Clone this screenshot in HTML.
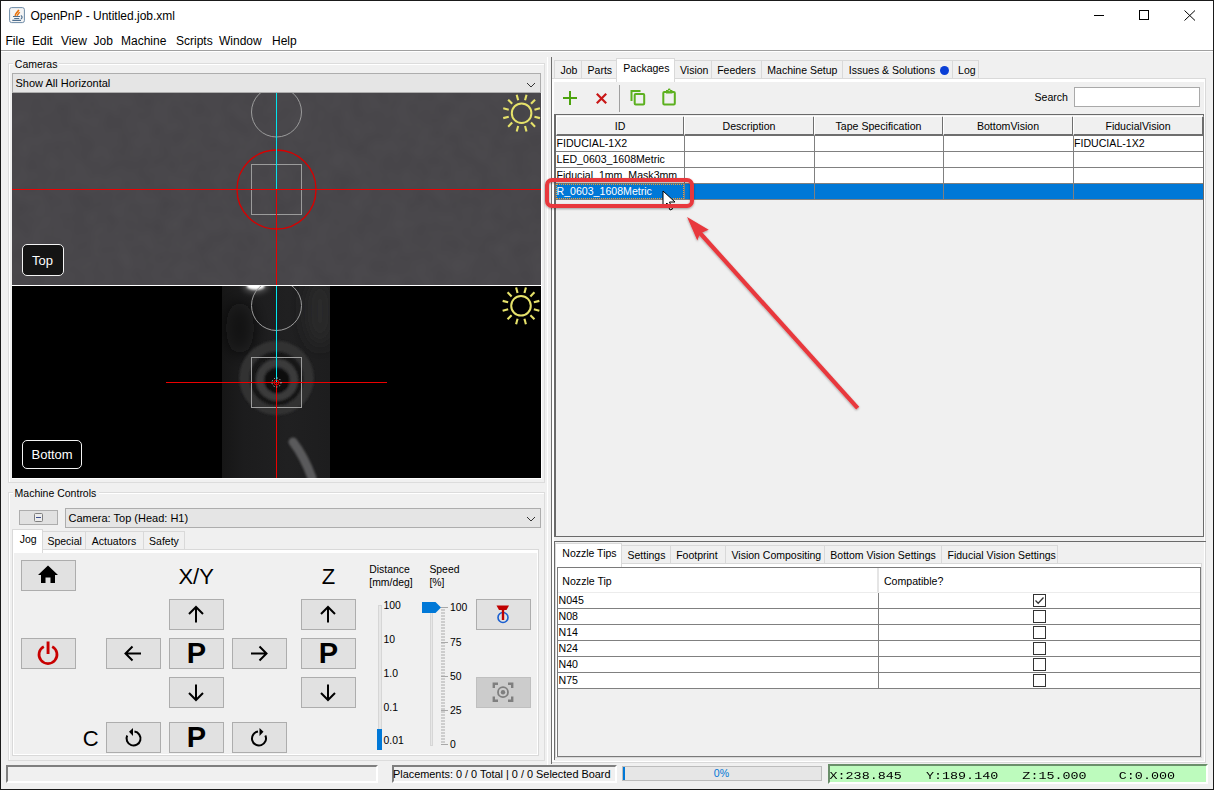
<!DOCTYPE html><html><head><meta charset="utf-8"><style>
html,body{margin:0;padding:0;}
body{width:1214px;height:790px;overflow:hidden;background:#f0f0f0;position:relative;font-family:"Liberation Sans",sans-serif;}
.a{position:absolute;}
.t{white-space:pre;}
</style></head><body>
<div class="a" style="left:0px;top:0px;width:1214px;height:51px;background:#fff;"></div>
<div class="a" style="left:0px;top:50px;width:1214px;height:1px;background:#a0a0a0;"></div>
<div class="a" style="left:0px;top:51px;width:1214px;height:1px;background:#fff;"></div>
<svg class="a" style="left:9px;top:7px;" width="17" height="17" viewBox="0 0 17 17">
<rect x="0.6" y="0.6" width="14.8" height="15" rx="2" fill="#f4f4f4" stroke="#6d8aa6" stroke-width="1"/>
<path d="M6.3 9 C5.8 7 8.5 5.5 9.8 2.8" stroke="#e8720c" stroke-width="1.7" fill="none"/>
<path d="M8.3 8.8 C8 7.5 10 6.5 10.6 5" stroke="#e8720c" stroke-width="1.4" fill="none"/>
<path d="M4 9.5 H11 M5.2 11.5 H10.2 M3.3 13.4 H12" stroke="#4f6f8f" stroke-width="1.2"/>
<path d="M11.8 8.6 Q14.3 10 12 12" stroke="#4f6f8f" stroke-width="1.2" fill="none"/>
</svg>
<div class="a t" style="top:10.34px;font-size:12px;line-height:12px;color:#000;font-weight:normal;font-family:'Liberation Sans', sans-serif;left:30.5px;">OpenPnP - Untitled.job.xml</div>
<div class="a" style="left:1094px;top:15px;width:10px;height:1px;background:#000;"></div>
<div class="a" style="left:1139px;top:10px;width:10px;height:10px;box-sizing:border-box;border:1px solid #000;"></div>
<svg class="a" style="left:1184px;top:10px;" width="12" height="11" viewBox="0 0 12 11"><path d="M0.5 0.5 L11 10.5 M11 0.5 L0.5 10.5" stroke="#000" stroke-width="1"/></svg>
<div class="a t" style="top:34.84px;font-size:12px;line-height:12px;color:#000;font-weight:normal;font-family:'Liberation Sans', sans-serif;left:5.5px;">File</div>
<div class="a t" style="top:34.84px;font-size:12px;line-height:12px;color:#000;font-weight:normal;font-family:'Liberation Sans', sans-serif;left:32px;">Edit</div>
<div class="a t" style="top:34.84px;font-size:12px;line-height:12px;color:#000;font-weight:normal;font-family:'Liberation Sans', sans-serif;left:61px;">View</div>
<div class="a t" style="top:34.84px;font-size:12px;line-height:12px;color:#000;font-weight:normal;font-family:'Liberation Sans', sans-serif;left:93.5px;">Job</div>
<div class="a t" style="top:34.84px;font-size:12px;line-height:12px;color:#000;font-weight:normal;font-family:'Liberation Sans', sans-serif;left:121px;">Machine</div>
<div class="a t" style="top:34.84px;font-size:12px;line-height:12px;color:#000;font-weight:normal;font-family:'Liberation Sans', sans-serif;left:176px;">Scripts</div>
<div class="a t" style="top:34.84px;font-size:12px;line-height:12px;color:#000;font-weight:normal;font-family:'Liberation Sans', sans-serif;left:219px;">Window</div>
<div class="a t" style="top:34.84px;font-size:12px;line-height:12px;color:#000;font-weight:normal;font-family:'Liberation Sans', sans-serif;left:272px;">Help</div>
<div class="a" style="left:8px;top:63px;width:537px;height:420px;box-sizing:border-box;border:1px solid #dcdcdc;"></div>
<div class="a" style="left:9px;top:64px;width:535px;height:418px;box-sizing:border-box;border:1px solid #fff;border-right:none;border-bottom:none;"></div>
<div class="a" style="left:12.8px;top:61px;width:46px;height:5px;background:#f0f0f0;"></div>
<div class="a t" style="top:59.11px;font-size:10.5px;line-height:10.5px;color:#000;font-weight:normal;font-family:'Liberation Sans', sans-serif;left:14.8px;">Cameras</div>
<div class="a" style="left:12px;top:73px;width:529px;height:20px;background:#e5e5e5;box-sizing:border-box;border:1px solid #adadad;"></div>
<div class="a t" style="top:77.69px;font-size:11px;line-height:11px;color:#000;font-weight:normal;font-family:'Liberation Sans', sans-serif;left:15.5px;">Show All Horizontal</div>
<svg class="a" style="left:526px;top:82px;" width="11" height="7" viewBox="0 0 11 7"><path d="M1 1 L5 5 L9 1" stroke="#333" stroke-width="1" fill="none"/></svg>
<svg class="a" style="left:12px;top:93px;" width="529" height="192" viewBox="0 0 529 192">
<defs><filter id="noise1"><feTurbulence type="fractalNoise" baseFrequency="0.05" numOctaves="2" seed="3"/><feColorMatrix values="0 0 0 0 0.5  0 0 0 0 0.5  0 0 0 0 0.5  0 0 0 0.06 0"/></filter></defs>
<rect width="529" height="192" fill="#454347"/>
<rect width="529" height="192" filter="url(#noise1)"/>
<circle cx="264.5" cy="19" r="25" stroke="#9b9b9b" stroke-width="1" fill="none"/>
<rect x="239.5" y="71.5" width="50" height="50" stroke="#9b9b9b" stroke-width="1" fill="none"/>
<circle cx="264.5" cy="96.5" r="39.5" stroke="#d80000" stroke-width="1.35" fill="none"/>
<rect x="0" y="96" width="529" height="1" fill="#ec0000"/>
<rect x="264" y="96" width="1" height="96" fill="#ec0000"/>
<rect x="264" y="0" width="1" height="96" fill="#00e5ef"/>
<circle cx="509.6" cy="20.2" r="9.8" stroke="#e6e26a" stroke-width="2" fill="none"/><line x1="522.45" y1="23.64" x2="527.95" y2="25.12" stroke="#e6e26a" stroke-width="2.1"/><line x1="519.00" y1="29.60" x2="523.04" y2="33.64" stroke="#e6e26a" stroke-width="2.1"/><line x1="513.04" y1="33.05" x2="514.52" y2="38.55" stroke="#e6e26a" stroke-width="2.1"/><line x1="506.16" y1="33.05" x2="504.68" y2="38.55" stroke="#e6e26a" stroke-width="2.1"/><line x1="500.20" y1="29.60" x2="496.16" y2="33.64" stroke="#e6e26a" stroke-width="2.1"/><line x1="496.75" y1="23.64" x2="491.25" y2="25.12" stroke="#e6e26a" stroke-width="2.1"/><line x1="496.75" y1="16.76" x2="491.25" y2="15.28" stroke="#e6e26a" stroke-width="2.1"/><line x1="500.20" y1="10.80" x2="496.16" y2="6.76" stroke="#e6e26a" stroke-width="2.1"/><line x1="506.16" y1="7.35" x2="504.68" y2="1.85" stroke="#e6e26a" stroke-width="2.1"/><line x1="513.04" y1="7.35" x2="514.52" y2="1.85" stroke="#e6e26a" stroke-width="2.1"/><line x1="519.00" y1="10.80" x2="523.04" y2="6.76" stroke="#e6e26a" stroke-width="2.1"/><line x1="522.45" y1="16.76" x2="527.95" y2="15.28" stroke="#e6e26a" stroke-width="2.1"/></svg>
<div class="a" style="left:12px;top:285px;width:529px;height:1px;background:#fff;"></div>
<svg class="a" style="left:12px;top:286px;" width="529" height="192" viewBox="0 0 529 192">
<defs>
<clipPath id="stripclip"><rect x="210" y="0" width="108" height="192"/></clipPath>
<filter id="bl0" filterUnits="userSpaceOnUse" x="150" y="-50" width="230" height="300"><feGaussianBlur stdDeviation="1.1"/></filter>
<filter id="bl1" x="-50%" y="-50%" width="200%" height="200%"><feGaussianBlur stdDeviation="1.2"/></filter>
<filter id="bl2" x="-50%" y="-50%" width="200%" height="200%"><feGaussianBlur stdDeviation="3"/></filter>
<filter id="bl3" filterUnits="userSpaceOnUse" x="150" y="-50" width="230" height="300"><feGaussianBlur stdDeviation="8"/></filter>
<linearGradient id="strip" x1="0" y1="0" x2="1" y2="0"><stop offset="0" stop-color="#161616"/><stop offset="0.2" stop-color="#1c1c1d"/><stop offset="0.6" stop-color="#202021"/><stop offset="1" stop-color="#1d1d1e"/></linearGradient>
</defs>
<rect width="529" height="192" fill="#000"/>
<rect x="210" y="0" width="108" height="192" fill="url(#strip)"/>

<g filter="url(#bl3)" clip-path="url(#stripclip)">
<ellipse cx="228" cy="42" rx="14" ry="26" fill="#101010" opacity="0.8"/>
<ellipse cx="308" cy="25" rx="14" ry="35" fill="#2a2a2b"/>
</g>
<g filter="url(#bl0)">
<circle cx="264.5" cy="92" r="32" stroke="#323233" stroke-width="10.5" fill="none"/>
<circle cx="264.5" cy="93" r="24" stroke="#121212" stroke-width="5" fill="none"/>
<circle cx="265" cy="94" r="17" stroke="#3a3a3b" stroke-width="8" fill="none"/>
<circle cx="265" cy="95" r="12.5" fill="#0b0b0b"/>
<path d="M281 156 Q292 170 300 192" stroke="#5a5a5b" stroke-width="9" stroke-linecap="round" fill="none"/>
</g>
<ellipse cx="243.7" cy="0" rx="12" ry="6" fill="#fff" opacity="0.35" filter="url(#bl2)"/><ellipse cx="243.7" cy="0" rx="9" ry="3.8" fill="#fff" filter="url(#bl1)"/>
<circle cx="264.5" cy="19.5" r="25" stroke="#9c9c9c" stroke-width="1" fill="none"/>
<rect x="239.5" y="71.5" width="50" height="50" stroke="#9c9c9c" stroke-width="1" fill="none"/>
<rect x="154" y="96" width="221" height="1" fill="#ec0000"/>
<rect x="264" y="96" width="1" height="96" fill="#ec0000"/>
<rect x="264" y="0" width="1" height="96" fill="#00e5ef"/>
<circle cx="264.5" cy="96.5" r="4.5" stroke="#ddd" stroke-width="1" stroke-dasharray="1 2" fill="none"/>
<circle cx="264.5" cy="96.5" r="2.5" stroke="#ec0000" stroke-width="1" fill="none"/>
<circle cx="509" cy="19.8" r="9.8" stroke="#e6e26a" stroke-width="2" fill="none"/><line x1="521.85" y1="23.24" x2="527.35" y2="24.72" stroke="#e6e26a" stroke-width="2.1"/><line x1="518.40" y1="29.20" x2="522.44" y2="33.24" stroke="#e6e26a" stroke-width="2.1"/><line x1="512.44" y1="32.65" x2="513.92" y2="38.15" stroke="#e6e26a" stroke-width="2.1"/><line x1="505.56" y1="32.65" x2="504.08" y2="38.15" stroke="#e6e26a" stroke-width="2.1"/><line x1="499.60" y1="29.20" x2="495.56" y2="33.24" stroke="#e6e26a" stroke-width="2.1"/><line x1="496.15" y1="23.24" x2="490.65" y2="24.72" stroke="#e6e26a" stroke-width="2.1"/><line x1="496.15" y1="16.36" x2="490.65" y2="14.88" stroke="#e6e26a" stroke-width="2.1"/><line x1="499.60" y1="10.40" x2="495.56" y2="6.36" stroke="#e6e26a" stroke-width="2.1"/><line x1="505.56" y1="6.95" x2="504.08" y2="1.45" stroke="#e6e26a" stroke-width="2.1"/><line x1="512.44" y1="6.95" x2="513.92" y2="1.45" stroke="#e6e26a" stroke-width="2.1"/><line x1="518.40" y1="10.40" x2="522.44" y2="6.36" stroke="#e6e26a" stroke-width="2.1"/><line x1="521.85" y1="16.36" x2="527.35" y2="14.88" stroke="#e6e26a" stroke-width="2.1"/></svg>
<div class="a" style="left:22px;top:244px;width:42px;height:32px;background:#141414;box-sizing:border-box;border:1.5px solid #f4f4f4;border-radius:5px;"></div>
<div class="a t" style="top:254.20px;font-size:13px;line-height:13px;color:#fff;font-weight:normal;font-family:'Liberation Sans', sans-serif;left:32px;">Top</div>
<div class="a" style="left:22px;top:440px;width:60px;height:29px;background:#000;box-sizing:border-box;border:1.5px solid #f4f4f4;border-radius:5px;"></div>
<div class="a t" style="top:447.80px;font-size:13px;line-height:13px;color:#fff;font-weight:normal;font-family:'Liberation Sans', sans-serif;left:31.5px;">Bottom</div>
<div class="a" style="left:541px;top:93px;width:1px;height:385px;background:#fff;"></div>
<div class="a" style="left:12px;top:478px;width:530px;height:1px;background:#fff;"></div>
<div class="a" style="left:8px;top:492px;width:537px;height:269px;box-sizing:border-box;border:1px solid #dcdcdc;"></div>
<div class="a" style="left:9px;top:493px;width:535px;height:267px;box-sizing:border-box;border:1px solid #fff;border-right:none;border-bottom:none;"></div>
<div class="a" style="left:12.6px;top:490px;width:86px;height:5px;background:#f0f0f0;"></div>
<div class="a t" style="top:488.11px;font-size:10.5px;line-height:10.5px;color:#000;font-weight:normal;font-family:'Liberation Sans', sans-serif;left:14.6px;">Machine Controls</div>
<div class="a" style="left:19px;top:510px;width:39px;height:15px;background:#e1e1e1;box-sizing:border-box;border:1px solid #adadad;"></div>
<svg class="a" style="left:34px;top:513px;" width="9" height="9" viewBox="0 0 9 9"><rect x="0.5" y="0.5" width="8" height="8" rx="1" fill="#ececec" stroke="#7f7f7f"/><rect x="2" y="4" width="5" height="1" fill="#3c4f8f"/></svg>
<div class="a" style="left:65px;top:508px;width:476px;height:20px;background:#e5e5e5;box-sizing:border-box;border:1px solid #adadad;"></div>
<div class="a t" style="top:512.69px;font-size:11px;line-height:11px;color:#000;font-weight:normal;font-family:'Liberation Sans', sans-serif;left:68.5px;">Camera: Top (Head: H1)</div>
<svg class="a" style="left:526px;top:516px;" width="11" height="7" viewBox="0 0 11 7"><path d="M1 1 L5 5 L9 1" stroke="#333" stroke-width="1" fill="none"/></svg>
<div class="a" style="left:12px;top:549px;width:527px;height:207px;background:#f0f0f0;box-sizing:border-box;border:1px solid #d9d9d9;"></div>
<div class="a" style="left:13px;top:550px;width:524px;height:3px;background:#fff;"></div>
<div class="a" style="left:13px;top:550px;width:1px;height:204px;background:#fff;"></div>
<div class="a" style="left:13px;top:754px;width:524px;height:1px;background:#fff;"></div>
<div class="a" style="left:537px;top:550px;width:1px;height:205px;background:#fff;"></div>
<div class="a" style="left:42px;top:531px;width:44px;height:19px;background:#f0f0f0;box-sizing:border-box;border:1px solid #d9d9d9;"></div>
<div class="a t" style="top:536.11px;font-size:10.5px;line-height:10.5px;color:#000;font-weight:normal;font-family:'Liberation Sans', sans-serif;left:47.4px;">Special</div>
<div class="a" style="left:85px;top:531px;width:59px;height:19px;background:#f0f0f0;box-sizing:border-box;border:1px solid #d9d9d9;"></div>
<div class="a t" style="top:536.11px;font-size:10.5px;line-height:10.5px;color:#000;font-weight:normal;font-family:'Liberation Sans', sans-serif;left:91.8px;">Actuators</div>
<div class="a" style="left:143px;top:531px;width:42px;height:19px;background:#f0f0f0;box-sizing:border-box;border:1px solid #d9d9d9;"></div>
<div class="a t" style="top:536.11px;font-size:10.5px;line-height:10.5px;color:#000;font-weight:normal;font-family:'Liberation Sans', sans-serif;left:149.1px;">Safety</div>
<div class="a" style="left:12px;top:529px;width:31px;height:24px;background:#fff;box-sizing:border-box;border:1px solid #d9d9d9;border-bottom:none;"></div>
<div class="a t" style="top:534.11px;font-size:10.5px;line-height:10.5px;color:#000;font-weight:normal;font-family:'Liberation Sans', sans-serif;left:19.7px;">Jog</div>
<div class="a" style="left:21px;top:560px;width:55px;height:31px;background:#e1e1e1;box-sizing:border-box;border:1px solid #adadad;"></div>
<svg class="a" style="left:21px;top:560px;" width="55" height="31" viewBox="0 0 55 31"><path d="M27 5.5 L37 15 L34 15 L34 23 L29.5 23 L29.5 17.5 L24.5 17.5 L24.5 23 L20 23 L20 15 L17 15 Z" fill="#000"/></svg>
<div class="a" style="left:21px;top:638px;width:55px;height:31px;background:#e1e1e1;box-sizing:border-box;border:1px solid #adadad;"></div>
<svg class="a" style="left:21px;top:638px;" width="55" height="31" viewBox="0 0 55 31"><path d="M31.2 8.6 A9 9 0 1 1 22.8 8.6" stroke="#c80000" stroke-width="2.7" fill="none"/><rect x="25.6" y="3.5" width="2.9" height="12.5" fill="#c80000"/></svg>
<div class="a t" style="top:565.68px;font-size:22px;line-height:22px;color:#000;font-weight:normal;font-family:'Liberation Sans', sans-serif;left:-303.9px;width:1000px;text-align:center;">X/Y</div>
<div class="a t" style="top:565.68px;font-size:22px;line-height:22px;color:#000;font-weight:normal;font-family:'Liberation Sans', sans-serif;left:-171.60000000000002px;width:1000px;text-align:center;">Z</div>
<div class="a" style="left:169px;top:599px;width:55px;height:31px;background:#e1e1e1;box-sizing:border-box;border:1px solid #adadad;"></div>
<svg class="a" style="left:169px;top:599px;" width="55" height="31" viewBox="0 0 55 31"><path d="M27 23.5 V8.0 M20 15.0 L27 8.0 L34 15.0" stroke="#000" stroke-width="2" fill="none"/></svg>
<div class="a" style="left:301px;top:599px;width:55px;height:31px;background:#e1e1e1;box-sizing:border-box;border:1px solid #adadad;"></div>
<svg class="a" style="left:301px;top:599px;" width="55" height="31" viewBox="0 0 55 31"><path d="M27 23.5 V8.0 M20 15.0 L27 8.0 L34 15.0" stroke="#000" stroke-width="2" fill="none"/></svg>
<div class="a" style="left:106px;top:638px;width:55px;height:31px;background:#e1e1e1;box-sizing:border-box;border:1px solid #adadad;"></div>
<svg class="a" style="left:106px;top:638px;" width="55" height="31" viewBox="0 0 55 31"><path d="M35 15.5 H19.5 M26.5 8.5 L19.5 15.5 L26.5 22.5" stroke="#000" stroke-width="2" fill="none"/></svg>
<div class="a" style="left:169px;top:638px;width:55px;height:31px;background:#e1e1e1;box-sizing:border-box;border:1px solid #adadad;"></div>
<svg class="a" style="left:169px;top:638px;" width="55" height="31" viewBox="0 0 55 31"><text x="27.5" y="25" text-anchor="middle" font-family="Liberation Sans" font-weight="bold" font-size="29" fill="#000">P</text></svg>
<div class="a" style="left:232px;top:638px;width:55px;height:31px;background:#e1e1e1;box-sizing:border-box;border:1px solid #adadad;"></div>
<svg class="a" style="left:232px;top:638px;" width="55" height="31" viewBox="0 0 55 31"><path d="M19 15.5 H34.5 M27.5 8.5 L34.5 15.5 L27.5 22.5" stroke="#000" stroke-width="2" fill="none"/></svg>
<div class="a" style="left:301px;top:638px;width:55px;height:31px;background:#e1e1e1;box-sizing:border-box;border:1px solid #adadad;"></div>
<svg class="a" style="left:301px;top:638px;" width="55" height="31" viewBox="0 0 55 31"><text x="27.5" y="25" text-anchor="middle" font-family="Liberation Sans" font-weight="bold" font-size="29" fill="#000">P</text></svg>
<div class="a" style="left:169px;top:677px;width:55px;height:31px;background:#e1e1e1;box-sizing:border-box;border:1px solid #adadad;"></div>
<svg class="a" style="left:169px;top:677px;" width="55" height="31" viewBox="0 0 55 31"><path d="M27 7.5 V23.0 M20 16.0 L27 23.0 L34 16.0" stroke="#000" stroke-width="2" fill="none"/></svg>
<div class="a" style="left:301px;top:677px;width:55px;height:31px;background:#e1e1e1;box-sizing:border-box;border:1px solid #adadad;"></div>
<svg class="a" style="left:301px;top:677px;" width="55" height="31" viewBox="0 0 55 31"><path d="M27 7.5 V23.0 M20 16.0 L27 23.0 L34 16.0" stroke="#000" stroke-width="2" fill="none"/></svg>
<div class="a t" style="top:727.88px;font-size:22px;line-height:22px;color:#000;font-weight:normal;font-family:'Liberation Sans', sans-serif;left:-409.2px;width:1000px;text-align:center;">C</div>
<div class="a" style="left:106px;top:722px;width:55px;height:31px;background:#e1e1e1;box-sizing:border-box;border:1px solid #adadad;"></div>
<svg class="a" style="left:106px;top:722px;" width="55" height="31" viewBox="0 0 55 31"><path d="M21.16 13.54 A7 7 0 1 0 28.47 9.57" stroke="#000" stroke-width="2" fill="none"/><path d="M23 9.8 L27 5.9 L27 14 Z" fill="#000"/></svg>
<div class="a" style="left:169px;top:722px;width:55px;height:31px;background:#e1e1e1;box-sizing:border-box;border:1px solid #adadad;"></div>
<svg class="a" style="left:169px;top:722px;" width="55" height="31" viewBox="0 0 55 31"><text x="27.5" y="25" text-anchor="middle" font-family="Liberation Sans" font-weight="bold" font-size="29" fill="#000">P</text></svg>
<div class="a" style="left:232px;top:722px;width:55px;height:31px;background:#e1e1e1;box-sizing:border-box;border:1px solid #adadad;"></div>
<svg class="a" style="left:232px;top:722px;" width="55" height="31" viewBox="0 0 55 31"><path d="M33.34 13.54 A7 7 0 1 1 26.03 9.57" stroke="#000" stroke-width="2" fill="none"/><path d="M31.5 9.8 L27.5 5.9 L27.5 14 Z" fill="#000"/></svg>
<div class="a t" style="top:564.80px;font-size:10.4px;line-height:10.4px;color:#000;font-weight:normal;font-family:'Liberation Sans', sans-serif;left:369.3px;">Distance</div>
<div class="a t" style="top:577.70px;font-size:10.4px;line-height:10.4px;color:#000;font-weight:normal;font-family:'Liberation Sans', sans-serif;left:369.3px;">[mm/deg]</div>
<div class="a t" style="top:564.80px;font-size:10.4px;line-height:10.4px;color:#000;font-weight:normal;font-family:'Liberation Sans', sans-serif;left:429.4px;">Speed</div>
<div class="a t" style="top:577.70px;font-size:10.4px;line-height:10.4px;color:#000;font-weight:normal;font-family:'Liberation Sans', sans-serif;left:429.4px;">[%]</div>
<div class="a" style="left:378px;top:605px;width:4px;height:140px;background:#e7e7e7;box-sizing:border-box;border:1px solid #d6d6d6;"></div>
<div class="a" style="left:377px;top:729px;width:5px;height:21px;background:#0078d7;"></div>
<div class="a t" style="top:600.90px;font-size:10.4px;line-height:10.4px;color:#000;font-weight:normal;font-family:'Liberation Sans', sans-serif;left:383.5px;">100</div>
<div class="a t" style="top:635.20px;font-size:10.4px;line-height:10.4px;color:#000;font-weight:normal;font-family:'Liberation Sans', sans-serif;left:383.5px;">10</div>
<div class="a t" style="top:669.20px;font-size:10.4px;line-height:10.4px;color:#000;font-weight:normal;font-family:'Liberation Sans', sans-serif;left:383.5px;">1.0</div>
<div class="a t" style="top:703.00px;font-size:10.4px;line-height:10.4px;color:#000;font-weight:normal;font-family:'Liberation Sans', sans-serif;left:383.5px;">0.1</div>
<div class="a t" style="top:736.20px;font-size:10.4px;line-height:10.4px;color:#000;font-weight:normal;font-family:'Liberation Sans', sans-serif;left:383.5px;">0.01</div>
<div class="a" style="left:430px;top:607px;width:3px;height:139px;background:#e7e7e7;box-sizing:border-box;border:1px solid #d6d6d6;"></div>
<div class="a" style="left:441px;top:609px;width:4px;height:2px;background:#cdcdcd;"></div>
<div class="a" style="left:441px;top:612px;width:4px;height:2px;background:#cdcdcd;"></div>
<div class="a" style="left:441px;top:615px;width:4px;height:2px;background:#cdcdcd;"></div>
<div class="a" style="left:441px;top:618px;width:4px;height:2px;background:#cdcdcd;"></div>
<div class="a" style="left:441px;top:621px;width:4px;height:2px;background:#cdcdcd;"></div>
<div class="a" style="left:441px;top:624px;width:4px;height:2px;background:#cdcdcd;"></div>
<div class="a" style="left:441px;top:627px;width:4px;height:2px;background:#cdcdcd;"></div>
<div class="a" style="left:441px;top:630px;width:4px;height:2px;background:#cdcdcd;"></div>
<div class="a" style="left:441px;top:633px;width:4px;height:2px;background:#cdcdcd;"></div>
<div class="a" style="left:441px;top:636px;width:4px;height:2px;background:#cdcdcd;"></div>
<div class="a" style="left:441px;top:639px;width:4px;height:2px;background:#cdcdcd;"></div>
<div class="a" style="left:441px;top:642px;width:4px;height:2px;background:#cdcdcd;"></div>
<div class="a" style="left:441px;top:645px;width:4px;height:2px;background:#cdcdcd;"></div>
<div class="a" style="left:441px;top:648px;width:4px;height:2px;background:#cdcdcd;"></div>
<div class="a" style="left:441px;top:651px;width:4px;height:2px;background:#cdcdcd;"></div>
<div class="a" style="left:441px;top:654px;width:4px;height:2px;background:#cdcdcd;"></div>
<div class="a" style="left:441px;top:657px;width:4px;height:2px;background:#cdcdcd;"></div>
<div class="a" style="left:441px;top:660px;width:4px;height:2px;background:#cdcdcd;"></div>
<div class="a" style="left:441px;top:663px;width:4px;height:2px;background:#cdcdcd;"></div>
<div class="a" style="left:441px;top:666px;width:4px;height:2px;background:#cdcdcd;"></div>
<div class="a" style="left:441px;top:669px;width:4px;height:2px;background:#cdcdcd;"></div>
<div class="a" style="left:441px;top:672px;width:4px;height:2px;background:#cdcdcd;"></div>
<div class="a" style="left:441px;top:675px;width:4px;height:2px;background:#cdcdcd;"></div>
<div class="a" style="left:441px;top:678px;width:4px;height:2px;background:#cdcdcd;"></div>
<div class="a" style="left:441px;top:681px;width:4px;height:2px;background:#cdcdcd;"></div>
<div class="a" style="left:441px;top:684px;width:4px;height:2px;background:#cdcdcd;"></div>
<div class="a" style="left:441px;top:687px;width:4px;height:2px;background:#cdcdcd;"></div>
<div class="a" style="left:441px;top:690px;width:4px;height:2px;background:#cdcdcd;"></div>
<div class="a" style="left:441px;top:693px;width:4px;height:2px;background:#cdcdcd;"></div>
<div class="a" style="left:441px;top:696px;width:4px;height:2px;background:#cdcdcd;"></div>
<div class="a" style="left:441px;top:699px;width:4px;height:2px;background:#cdcdcd;"></div>
<div class="a" style="left:441px;top:702px;width:4px;height:2px;background:#cdcdcd;"></div>
<div class="a" style="left:441px;top:705px;width:4px;height:2px;background:#cdcdcd;"></div>
<div class="a" style="left:441px;top:708px;width:4px;height:2px;background:#cdcdcd;"></div>
<div class="a" style="left:441px;top:711px;width:4px;height:2px;background:#cdcdcd;"></div>
<div class="a" style="left:441px;top:714px;width:4px;height:2px;background:#cdcdcd;"></div>
<div class="a" style="left:441px;top:717px;width:4px;height:2px;background:#cdcdcd;"></div>
<div class="a" style="left:441px;top:720px;width:4px;height:2px;background:#cdcdcd;"></div>
<div class="a" style="left:441px;top:723px;width:4px;height:2px;background:#cdcdcd;"></div>
<div class="a" style="left:441px;top:726px;width:4px;height:2px;background:#cdcdcd;"></div>
<div class="a" style="left:441px;top:729px;width:4px;height:2px;background:#cdcdcd;"></div>
<div class="a" style="left:441px;top:732px;width:4px;height:2px;background:#cdcdcd;"></div>
<div class="a" style="left:441px;top:735px;width:4px;height:2px;background:#cdcdcd;"></div>
<div class="a" style="left:441px;top:738px;width:4px;height:2px;background:#cdcdcd;"></div>
<div class="a" style="left:441px;top:741px;width:4px;height:2px;background:#cdcdcd;"></div>
<div class="a" style="left:441px;top:607px;width:7px;height:1px;background:#a8a8a8;"></div>
<div class="a t" style="top:602.70px;font-size:10.4px;line-height:10.4px;color:#000;font-weight:normal;font-family:'Liberation Sans', sans-serif;left:450px;">100</div>
<div class="a" style="left:441px;top:642px;width:7px;height:1px;background:#a8a8a8;"></div>
<div class="a t" style="top:638.20px;font-size:10.4px;line-height:10.4px;color:#000;font-weight:normal;font-family:'Liberation Sans', sans-serif;left:450px;">75</div>
<div class="a" style="left:441px;top:676px;width:7px;height:1px;background:#a8a8a8;"></div>
<div class="a t" style="top:672.20px;font-size:10.4px;line-height:10.4px;color:#000;font-weight:normal;font-family:'Liberation Sans', sans-serif;left:450px;">50</div>
<div class="a" style="left:441px;top:710px;width:7px;height:1px;background:#a8a8a8;"></div>
<div class="a t" style="top:706.20px;font-size:10.4px;line-height:10.4px;color:#000;font-weight:normal;font-family:'Liberation Sans', sans-serif;left:450px;">25</div>
<div class="a" style="left:441px;top:744px;width:7px;height:1px;background:#a8a8a8;"></div>
<div class="a t" style="top:740.20px;font-size:10.4px;line-height:10.4px;color:#000;font-weight:normal;font-family:'Liberation Sans', sans-serif;left:450px;">0</div>
<svg class="a" style="left:422px;top:602px;" width="20" height="11" viewBox="0 0 20 11"><path d="M0 0 H13.5 L19 5.5 L13.5 11 H0 Z" fill="#0078d7"/></svg>
<div class="a" style="left:476px;top:599px;width:55px;height:31px;background:#e1e1e1;box-sizing:border-box;border:1px solid #adadad;"></div>
<svg class="a" style="left:476px;top:599px;" width="55" height="31" viewBox="0 0 55 31"><path d="M20.5 6.5 H33 L30.5 11 H23 Z" fill="#c00000"/><circle cx="27" cy="18.5" r="5" stroke="#1a5fd0" stroke-width="1.6" fill="none"/><rect x="25.8" y="10" width="2.4" height="11" fill="#c00000"/></svg>
<div class="a" style="left:476px;top:677px;width:55px;height:31px;background:#cccccc;box-sizing:border-box;border:1px solid #bfbfbf;"></div>
<svg class="a" style="left:476px;top:677px;" width="55" height="31" viewBox="0 0 55 31"><path d="M17.8 11 V6.8 H22 M32 6.8 H36.2 V11 M36.2 19.5 V23.7 H32 M22 23.7 H17.8 V19.5" stroke="#7f7f7f" stroke-width="2.4" fill="none"/><circle cx="27" cy="15.2" r="5" stroke="#7f7f7f" stroke-width="1.8" fill="none"/><circle cx="27" cy="15.2" r="2.2" fill="#7f7f7f"/></svg>
<div class="a" style="left:547px;top:57px;width:1px;height:708px;background:#fff;"></div>
<div class="a" style="left:551px;top:57px;width:1px;height:707px;background:#6e6e6e;"></div>
<div class="a" style="left:552px;top:78px;width:654px;height:685px;background:#f0f0f0;box-sizing:border-box;border:1px solid #d9d9d9;border-left:none;"></div>
<div class="a" style="left:552px;top:79px;width:653px;height:3px;background:#fff;"></div>
<div class="a" style="left:552px;top:79px;width:2px;height:683px;background:#fff;"></div>
<div class="a" style="left:1204px;top:79px;width:1px;height:683px;background:#fff;"></div>
<div class="a" style="left:552px;top:761px;width:653px;height:1px;background:#fff;"></div>
<div class="a" style="left:554px;top:60px;width:28px;height:19px;background:#f0f0f0;box-sizing:border-box;border:1px solid #d9d9d9;"></div>
<div class="a t" style="top:65.11px;font-size:10.5px;line-height:10.5px;color:#000;font-weight:normal;font-family:'Liberation Sans', sans-serif;left:560.4px;">Job</div>
<div class="a" style="left:581px;top:60px;width:36px;height:19px;background:#f0f0f0;box-sizing:border-box;border:1px solid #d9d9d9;"></div>
<div class="a t" style="top:65.11px;font-size:10.5px;line-height:10.5px;color:#000;font-weight:normal;font-family:'Liberation Sans', sans-serif;left:587.6px;">Parts</div>
<div class="a" style="left:674px;top:60px;width:38px;height:19px;background:#f0f0f0;box-sizing:border-box;border:1px solid #d9d9d9;"></div>
<div class="a t" style="top:65.11px;font-size:10.5px;line-height:10.5px;color:#000;font-weight:normal;font-family:'Liberation Sans', sans-serif;left:680px;">Vision</div>
<div class="a" style="left:711px;top:60px;width:51px;height:19px;background:#f0f0f0;box-sizing:border-box;border:1px solid #d9d9d9;"></div>
<div class="a t" style="top:65.11px;font-size:10.5px;line-height:10.5px;color:#000;font-weight:normal;font-family:'Liberation Sans', sans-serif;left:717.2px;">Feeders</div>
<div class="a" style="left:761px;top:60px;width:82px;height:19px;background:#f0f0f0;box-sizing:border-box;border:1px solid #d9d9d9;"></div>
<div class="a t" style="top:65.11px;font-size:10.5px;line-height:10.5px;color:#000;font-weight:normal;font-family:'Liberation Sans', sans-serif;left:767.3px;">Machine Setup</div>
<div class="a" style="left:842px;top:60px;width:111px;height:19px;background:#f0f0f0;box-sizing:border-box;border:1px solid #d9d9d9;"></div>
<div class="a t" style="top:65.11px;font-size:10.5px;line-height:10.5px;color:#000;font-weight:normal;font-family:'Liberation Sans', sans-serif;left:848.8px;">Issues &amp; Solutions</div>
<div class="a" style="left:952px;top:60px;width:27px;height:19px;background:#f0f0f0;box-sizing:border-box;border:1px solid #d9d9d9;"></div>
<div class="a t" style="top:65.11px;font-size:10.5px;line-height:10.5px;color:#000;font-weight:normal;font-family:'Liberation Sans', sans-serif;left:958.1px;">Log</div>
<div class="a" style="left:616px;top:58px;width:59px;height:24px;background:#fff;box-sizing:border-box;border:1px solid #d9d9d9;border-bottom:none;"></div>
<div class="a t" style="top:63.31px;font-size:10.5px;line-height:10.5px;color:#000;font-weight:normal;font-family:'Liberation Sans', sans-serif;left:623.3px;">Packages</div>
<div class="a" style="left:939.5px;top:65.7px;width:9px;height:9px;background:#0a3fd6;border-radius:50%;"></div>
<svg class="a" style="left:562px;top:90px;" width="16" height="16" viewBox="0 0 16 16"><rect x="1" y="7" width="14" height="2" fill="#4ca30d"/><rect x="7" y="1" width="2" height="14" fill="#4ca30d"/></svg>
<svg class="a" style="left:595px;top:92px;" width="13" height="13" viewBox="0 0 13 13"><path d="M1.8 1.8 L11.2 11.2 M11.2 1.8 L1.8 11.2" stroke="#c91717" stroke-width="2.2"/></svg>
<div class="a" style="left:619px;top:85px;width:1px;height:27px;background:#a0a0a0;"></div>
<svg class="a" style="left:629px;top:89px;" width="18" height="18" viewBox="0 0 18 18"><path d="M2.5 12 V2 H11.5" stroke="#5cb01f" stroke-width="2" fill="none"/><rect x="5.7" y="5" width="9.5" height="10.5" rx="1" stroke="#5cb01f" stroke-width="2" fill="none"/></svg>
<svg class="a" style="left:660px;top:88px;" width="18" height="19" viewBox="0 0 18 19"><rect x="3.3" y="4" width="11.5" height="12.5" rx="1" stroke="#5cb01f" stroke-width="2" fill="none"/><path d="M6 5.5 V2 H7.8 A1.4 1.4 0 0 1 10.6 2 H12.4 V5.5 Z" fill="#5cb01f"/><circle cx="9.2" cy="2.6" r="0.7" fill="#f0f0f0"/></svg>
<div class="a t" style="top:92.03px;font-size:10.6px;line-height:10.6px;color:#000;font-weight:normal;font-family:'Liberation Sans', sans-serif;left:68px;width:1000px;text-align:right;">Search</div>
<div class="a" style="left:1074px;top:87px;width:126px;height:20px;background:#fff;box-sizing:border-box;border:1px solid #a9a9a9;"></div>
<div class="a" style="left:554px;top:114px;width:650px;height:423px;background:#f0f0f0;box-sizing:border-box;border:1px solid #6a6a6a;border-left:2px solid #6a6a6a;"></div>
<div class="a" style="left:556px;top:116px;width:129px;height:20px;background:#f0f0f0;box-sizing:border-box;border:1px solid #fff;border-right:2px solid #6e6e6e;border-bottom:2px solid #6e6e6e;"></div>
<div class="a t" style="top:121.03px;font-size:10.6px;line-height:10.6px;color:#000;font-weight:normal;font-family:'Liberation Sans', sans-serif;left:120.0px;width:1000px;text-align:center;">ID</div>
<div class="a" style="left:684px;top:116px;width:131px;height:20px;background:#f0f0f0;box-sizing:border-box;border:1px solid #fff;border-right:2px solid #6e6e6e;border-bottom:2px solid #6e6e6e;"></div>
<div class="a t" style="top:121.03px;font-size:10.6px;line-height:10.6px;color:#000;font-weight:normal;font-family:'Liberation Sans', sans-serif;left:249.0px;width:1000px;text-align:center;">Description</div>
<div class="a" style="left:814px;top:116px;width:130px;height:20px;background:#f0f0f0;box-sizing:border-box;border:1px solid #fff;border-right:2px solid #6e6e6e;border-bottom:2px solid #6e6e6e;"></div>
<div class="a t" style="top:121.03px;font-size:10.6px;line-height:10.6px;color:#000;font-weight:normal;font-family:'Liberation Sans', sans-serif;left:378.5px;width:1000px;text-align:center;">Tape Specification</div>
<div class="a" style="left:943px;top:116px;width:131px;height:20px;background:#f0f0f0;box-sizing:border-box;border:1px solid #fff;border-right:2px solid #6e6e6e;border-bottom:2px solid #6e6e6e;"></div>
<div class="a t" style="top:121.03px;font-size:10.6px;line-height:10.6px;color:#000;font-weight:normal;font-family:'Liberation Sans', sans-serif;left:508.0px;width:1000px;text-align:center;">BottomVision</div>
<div class="a" style="left:1073px;top:116px;width:131px;height:20px;background:#f0f0f0;box-sizing:border-box;border:1px solid #fff;border-right:2px solid #6e6e6e;border-bottom:2px solid #6e6e6e;"></div>
<div class="a t" style="top:121.03px;font-size:10.6px;line-height:10.6px;color:#000;font-weight:normal;font-family:'Liberation Sans', sans-serif;left:638.0px;width:1000px;text-align:center;">FiducialVision</div>
<div class="a" style="left:556px;top:136px;width:647px;height:64px;background:#fff;"></div>
<div class="a" style="left:556px;top:151px;width:647px;height:1px;background:#808080;"></div>
<div class="a" style="left:556px;top:167px;width:647px;height:1px;background:#808080;"></div>
<div class="a" style="left:556px;top:183px;width:647px;height:1px;background:#808080;"></div>
<div class="a" style="left:556px;top:184px;width:647px;height:15px;background:#0078d7;"></div>
<div class="a" style="left:556px;top:199px;width:647px;height:1px;background:#808080;"></div>
<div class="a" style="left:684px;top:136px;width:1px;height:64px;background:#808080;"></div>
<div class="a" style="left:814px;top:136px;width:1px;height:64px;background:#808080;"></div>
<div class="a" style="left:943px;top:136px;width:1px;height:64px;background:#808080;"></div>
<div class="a" style="left:1073px;top:136px;width:1px;height:64px;background:#808080;"></div>
<div class="a t" style="top:137.73px;font-size:10.6px;line-height:10.6px;color:#000;font-weight:normal;font-family:'Liberation Sans', sans-serif;left:556.5px;">FIDUCIAL-1X2</div>
<div class="a t" style="top:153.73px;font-size:10.6px;line-height:10.6px;color:#000;font-weight:normal;font-family:'Liberation Sans', sans-serif;left:556.5px;">LED_0603_1608Metric</div>
<div class="a t" style="top:169.73px;font-size:10.6px;line-height:10.6px;color:#000;font-weight:normal;font-family:'Liberation Sans', sans-serif;left:556.5px;">Fiducial_1mm_Mask3mm</div>
<div class="a t" style="top:137.73px;font-size:10.6px;line-height:10.6px;color:#000;font-weight:normal;font-family:'Liberation Sans', sans-serif;left:1074px;">FIDUCIAL-1X2</div>
<div class="a" style="left:556px;top:184px;width:128px;height:15px;box-sizing:border-box;border:1px dotted #f5a030;"></div>
<div class="a t" style="top:186.03px;font-size:10.6px;line-height:10.6px;color:#fff;font-weight:normal;font-family:'Liberation Sans', sans-serif;left:556.5px;">R_0603_1608Metric</div>
<div class="a" style="left:554px;top:541px;width:652px;height:1px;background:#6a6a6a;"></div>
<div class="a" style="left:554px;top:541px;width:1px;height:219px;background:#6a6a6a;"></div>
<div class="a" style="left:555px;top:563px;width:647px;height:195px;background:#f0f0f0;box-sizing:border-box;border:1px solid #d9d9d9;"></div>
<div class="a" style="left:556px;top:564px;width:645px;height:3px;background:#fff;"></div>
<div class="a" style="left:556px;top:564px;width:1px;height:193px;background:#fff;"></div>
<div class="a" style="left:621px;top:545px;width:50px;height:19px;background:#f0f0f0;box-sizing:border-box;border:1px solid #d9d9d9;"></div>
<div class="a t" style="top:550.11px;font-size:10.5px;line-height:10.5px;color:#000;font-weight:normal;font-family:'Liberation Sans', sans-serif;left:627.5px;">Settings</div>
<div class="a" style="left:670px;top:545px;width:56px;height:19px;background:#f0f0f0;box-sizing:border-box;border:1px solid #d9d9d9;"></div>
<div class="a t" style="top:550.11px;font-size:10.5px;line-height:10.5px;color:#000;font-weight:normal;font-family:'Liberation Sans', sans-serif;left:676.2px;">Footprint</div>
<div class="a" style="left:725px;top:545px;width:100px;height:19px;background:#f0f0f0;box-sizing:border-box;border:1px solid #d9d9d9;"></div>
<div class="a t" style="top:550.11px;font-size:10.5px;line-height:10.5px;color:#000;font-weight:normal;font-family:'Liberation Sans', sans-serif;left:731.5px;">Vision Compositing</div>
<div class="a" style="left:824px;top:545px;width:118px;height:19px;background:#f0f0f0;box-sizing:border-box;border:1px solid #d9d9d9;"></div>
<div class="a t" style="top:550.11px;font-size:10.5px;line-height:10.5px;color:#000;font-weight:normal;font-family:'Liberation Sans', sans-serif;left:830.3px;">Bottom Vision Settings</div>
<div class="a" style="left:941px;top:545px;width:117px;height:19px;background:#f0f0f0;box-sizing:border-box;border:1px solid #d9d9d9;"></div>
<div class="a t" style="top:550.11px;font-size:10.5px;line-height:10.5px;color:#000;font-weight:normal;font-family:'Liberation Sans', sans-serif;left:947.5px;">Fiducial Vision Settings</div>
<div class="a" style="left:555px;top:543px;width:67px;height:24px;background:#fff;box-sizing:border-box;border:1px solid #d9d9d9;border-bottom:none;"></div>
<div class="a t" style="top:547.91px;font-size:10.5px;line-height:10.5px;color:#000;font-weight:normal;font-family:'Liberation Sans', sans-serif;left:562.3px;">Nozzle Tips</div>
<div class="a" style="left:557px;top:567px;width:644px;height:190px;background:#f0f0f0;box-sizing:border-box;border:1px solid #7a7a7a;"></div>
<div class="a" style="left:558px;top:568px;width:642px;height:24px;background:#fff;"></div>
<div class="a" style="left:558px;top:592px;width:642px;height:1px;background:#ececec;"></div>
<div class="a" style="left:877px;top:568px;width:2px;height:24px;background:#e5e5e5;"></div>
<div class="a t" style="top:576.03px;font-size:10.6px;line-height:10.6px;color:#000;font-weight:normal;font-family:'Liberation Sans', sans-serif;left:562.3px;">Nozzle Tip</div>
<div class="a t" style="top:576.03px;font-size:10.6px;line-height:10.6px;color:#000;font-weight:normal;font-family:'Liberation Sans', sans-serif;left:883.9px;">Compatible?</div>
<div class="a" style="left:558px;top:593px;width:642px;height:96px;background:#fff;"></div>
<div class="a" style="left:558px;top:608px;width:642px;height:1px;background:#808080;"></div>
<div class="a" style="left:558px;top:624px;width:642px;height:1px;background:#808080;"></div>
<div class="a" style="left:558px;top:640px;width:642px;height:1px;background:#808080;"></div>
<div class="a" style="left:558px;top:656px;width:642px;height:1px;background:#808080;"></div>
<div class="a" style="left:558px;top:672px;width:642px;height:1px;background:#808080;"></div>
<div class="a" style="left:558px;top:688px;width:642px;height:1px;background:#808080;"></div>
<div class="a" style="left:878px;top:593px;width:1px;height:96px;background:#808080;"></div>
<div class="a t" style="top:594.73px;font-size:10.6px;line-height:10.6px;color:#000;font-weight:normal;font-family:'Liberation Sans', sans-serif;left:558.5px;">N045</div>
<div class="a" style="left:1033px;top:594px;width:13px;height:13px;background:#fff;box-sizing:border-box;border:1px solid #333;"></div>
<div class="a t" style="top:610.73px;font-size:10.6px;line-height:10.6px;color:#000;font-weight:normal;font-family:'Liberation Sans', sans-serif;left:558.5px;">N08</div>
<div class="a" style="left:1033px;top:610px;width:13px;height:13px;background:#fff;box-sizing:border-box;border:1px solid #333;"></div>
<div class="a t" style="top:626.73px;font-size:10.6px;line-height:10.6px;color:#000;font-weight:normal;font-family:'Liberation Sans', sans-serif;left:558.5px;">N14</div>
<div class="a" style="left:1033px;top:626px;width:13px;height:13px;background:#fff;box-sizing:border-box;border:1px solid #333;"></div>
<div class="a t" style="top:642.73px;font-size:10.6px;line-height:10.6px;color:#000;font-weight:normal;font-family:'Liberation Sans', sans-serif;left:558.5px;">N24</div>
<div class="a" style="left:1033px;top:642px;width:13px;height:13px;background:#fff;box-sizing:border-box;border:1px solid #333;"></div>
<div class="a t" style="top:658.73px;font-size:10.6px;line-height:10.6px;color:#000;font-weight:normal;font-family:'Liberation Sans', sans-serif;left:558.5px;">N40</div>
<div class="a" style="left:1033px;top:658px;width:13px;height:13px;background:#fff;box-sizing:border-box;border:1px solid #333;"></div>
<div class="a t" style="top:674.73px;font-size:10.6px;line-height:10.6px;color:#000;font-weight:normal;font-family:'Liberation Sans', sans-serif;left:558.5px;">N75</div>
<div class="a" style="left:1033px;top:674px;width:13px;height:13px;background:#fff;box-sizing:border-box;border:1px solid #333;"></div>
<svg class="a" style="left:1033px;top:594px;" width="13" height="13" viewBox="0 0 13 13"><path d="M2.5 6.5 L5.2 9.2 L10.5 3.5" stroke="#333" stroke-width="1.3" fill="none"/></svg>
<svg class="a" style="left:662px;top:190px;" width="14" height="22" viewBox="0 0 14 22"><path d="M1 1 V17 L5 13 L8 20 L10.5 19 L7.5 12 H13 Z" fill="#fff" stroke="#000" stroke-width="1"/></svg>
<svg class="a" style="left:0px;top:0px;pointer-events:none;" width="1214" height="790" viewBox="0 0 1214 790">
<defs><filter id="sh" x="-10%" y="-10%" width="120%" height="130%"><feDropShadow dx="0" dy="1" stdDeviation="0.8" flood-color="#000" flood-opacity="0.35"/></filter></defs>
<rect x="547" y="180" width="145" height="26" rx="5" ry="5" stroke="#e8383d" stroke-width="4" fill="none" filter="url(#sh)"/>
<g filter="url(#sh)">
<line x1="857.7" y1="408.2" x2="695" y2="227.5" stroke="#e8383d" stroke-width="4.2"/>
<path d="M687.1 217.1 L708.7 229.8 L700 233.5 L697.3 240.4 Z" fill="#e8383d"/>
</g>
</svg>
<div class="a" style="left:6px;top:765px;width:372px;height:18px;background:#f0f0f0;box-sizing:border-box;border:2px solid #fff;border-top-color:#7f7f7f;border-left-color:#7f7f7f;"></div>
<div class="a" style="left:392px;top:765px;width:225px;height:18px;background:#f0f0f0;box-sizing:border-box;border:2px solid #fff;border-top-color:#7f7f7f;border-left-color:#7f7f7f;"></div>
<div class="a t" style="top:769.07px;font-size:10.9px;line-height:10.9px;color:#000;font-weight:normal;font-family:'Liberation Sans', sans-serif;left:393px;">Placements: 0 / 0 Total | 0 / 0 Selected Board</div>
<div class="a" style="left:622px;top:766px;width:200px;height:15px;background:#e6e6e6;box-sizing:border-box;border:1px solid #bcbcbc;"></div>
<div class="a" style="left:623px;top:767px;width:2px;height:13px;background:#0078d7;"></div>
<div class="a t" style="top:767.53px;font-size:10.6px;line-height:10.6px;color:#0078d7;font-weight:normal;font-family:'Liberation Sans', sans-serif;left:221.5px;width:1000px;text-align:center;">0%</div>
<div class="a" style="left:828px;top:764px;width:380px;height:20px;background:#bdfbbd;box-sizing:border-box;border:2px solid #fff;border-top-color:#6a8f6a;border-left-color:#6a8f6a;"></div>
<div class="a t" style="top:768.73px;font-size:13.4px;line-height:13.4px;color:#000;font-weight:normal;font-family:'Liberation Mono', monospace;left:829.5px;transform:scaleY(0.86);transform-origin:0 10.27px;">X:238.845   Y:189.140   Z:15.000    C:0.000</div>
<div class="a" style="left:0px;top:0px;width:1214px;height:1px;background:#1a1a1a;"></div>
<div class="a" style="left:0px;top:0px;width:1px;height:790px;background:#1a1a1a;"></div>
<div class="a" style="left:1213px;top:0px;width:1px;height:790px;background:#1a1a1a;"></div>
<div class="a" style="left:0px;top:789px;width:1214px;height:1px;background:#1a1a1a;"></div>
</body></html>
